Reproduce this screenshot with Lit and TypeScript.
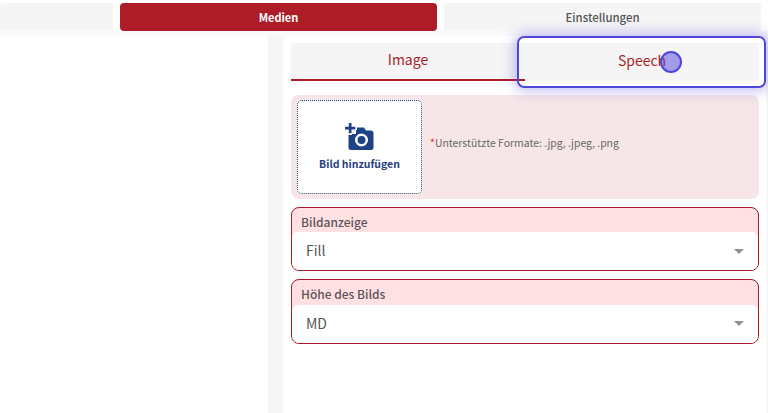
import {LitElement, html, css} from 'lit';
import {customElement} from 'lit/decorators.js';

@customElement('app-root')
export class AppRoot extends LitElement {
  static styles = css`
    :host {
      display: block;
      position: relative;
      width: 768px;
      height: 413px;
      overflow: hidden;
      background: #f6f6f6;
      font-family: 'Noto Sans CJK JP', 'Noto Sans', sans-serif;
      color: #555;
    }
    .top {
      display: grid;
      grid-template-columns: 113px 317px 317px;
      gap: 7px;
      height: 36px;
      padding: 3px 7px 0 0;
      box-sizing: border-box;
      background: #fff;
      border-bottom: 5px solid #fafafa;
    }
    .top div {
      display: flex;
      align-items: center;
      justify-content: center;
      background: #f5f5f5;
      border-radius: 4px;
      font-size: 11.4px;
      font-weight: 500;
      color: #555;
    }
    .top .on {
      background: #ae1c28;
      color: #fff;
      font-size: 11px;
      font-weight: 700;
    }
    .main {
      display: flex;
      gap: 15px;
      height: 377px;
      padding-right: 2px;
    }
    .left {
      width: 268px;
      background: #fff;
    }
    .right {
      flex: 1;
      background: #fff;
      border-radius: 6px 6px 0 0;
      padding: 7px 7px 0 8px;
    }
    .tabs {
      display: grid;
      grid-template-columns: 234px 234px;
      height: 38px;
      background: #f5f5f5;
    }
    .tabs div {
      display: flex;
      align-items: center;
      justify-content: center;
      height: 36px;
      padding-bottom: 2px;
      box-sizing: border-box;
      font-size: 14px;
      color: #ae1c28;
    }
    .tabs .active {
      height: 38px;
      border-bottom: 2px solid #ae1c28;
      padding-bottom: 4px;
    }
    .upload {
      display: flex;
      align-items: center;
      gap: 8px;
      height: 104px;
      margin-top: 14px;
      padding: 5px 6px;
      box-sizing: border-box;
      background: #f6e6e7;
      border-radius: 8px;
    }
    .drop {
      display: flex;
      flex-direction: column;
      align-items: center;
      justify-content: center;
      gap: 5px;
      width: 125px;
      height: 94px;
      box-sizing: border-box;
      background: #fff;
      border: 1px dotted #1f3f7f;
      border-radius: 5px;
      font-size: 10.5px;
      font-weight: 700;
      color: #1f3f7f;
    }
    .drop svg {
      display: block;
    }
    .hint {
      font-size: 10.45px;
      color: #666;
      margin-top: -9px;
    }
    .hint span {
      color: #e02020;
    }
    .field {
      margin-top: 8px;
      background: #ffe1e4;
      border: 1px solid #a81a26;
      border-radius: 8px;
      overflow: hidden;
    }
    .field label {
      display: block;
      height: 24.300px;
      line-height: 27px;
      padding-left: 9px;
      font-size: 12px;
      font-weight: 500;
      color: #5d5358;
    }
    .select {
      display: flex;
      align-items: center;
      justify-content: space-between;
      height: 38.200px;
      padding: 0 14px 2px 14px;
      box-sizing: border-box;
      background: #fff;
      border-radius: 6px;
      font-size: 14px;
      color: #555;
    }
    .caret {
      width: 0;
      height: 0;
      margin-top: 2px;
      border-left: 5px solid transparent;
      border-right: 5px solid transparent;
      border-top: 5px solid #919191;
    }
    .focus {
      position: absolute;
      left: 517px;
      top: 36px;
      width: 249px;
      height: 52px;
      box-sizing: border-box;
      border: 2px solid #4f46dc;
      border-radius: 7px;
      box-shadow: 0 0 14px 2px rgba(79, 70, 220, 0.4);
    }
    .cursor {
      position: absolute;
      left: 660px;
      top: 51px;
      width: 22px;
      height: 22px;
      box-sizing: border-box;
      border: 2px solid #4f46dc;
      border-radius: 50%;
      background: rgba(79, 70, 220, 0.5);
    }
  `;

  field(label: string, value: string) {
    return html`
      <div class="field">
        <label>${label}</label>
        <div class="select">${value}<i class="caret"></i></div>
      </div>
    `;
  }

  render() {
    return html`
      <div class="top">
        <div></div>
        <div class="on">Medien</div>
        <div>Einstellungen</div>
      </div>
      <div class="main">
        <div class="left"></div>
        <div class="right">
          <div class="tabs">
            <div class="active">Image</div>
            <div>Speech</div>
          </div>
          <div class="upload">
            <div class="drop">
              <!-- camera with a plus, body knocked out behind the plus -->
              <svg width="30" height="28" viewBox="0 0 30 28">
                <path
                  fill="#1f4285"
                  fill-rule="evenodd"
                  d="M12 4.500h7l2 3h4.500a3 3 0 0 1 3 3V24.500a2.500 2.500 0 0 1-2.500 2.500H6a2.500 2.500 0 0 1-2.500-2.500V12H7v-1h4V7h1zM16.500 10.500a6.500 6.500 0 1 0 0 13a6.500 6.500 0 0 0 0-13zm0 2.500a4 4 0 1 1 0 8a4 4 0 0 1 0-8z"
                />
                <path fill="#1f4285" d="M3.800 0h2.700v3.800h3.800v2.700H6.500v3.800H3.800V6.500H0V3.800h3.800z" />
              </svg>
              Bild hinzufügen
            </div>
            <div class="hint"><span>*</span>Unterstützte Formate: .jpg, .jpeg, .png</div>
          </div>
          ${this.field('Bildanzeige', 'Fill')} ${this.field('Höhe des Bilds', 'MD')}
        </div>
      </div>
      <div class="focus"></div>
      <div class="cursor"></div>
    `;
  }
}
